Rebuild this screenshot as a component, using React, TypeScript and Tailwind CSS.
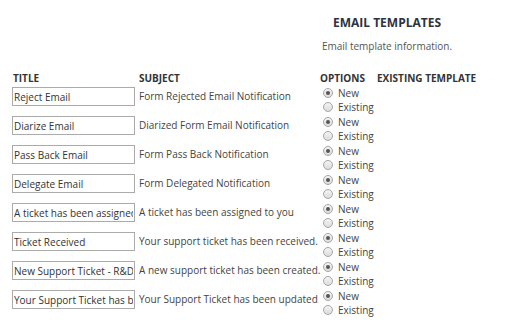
const rows = [
  { title: 'Reject Email', subject: 'Form Rejected Email Notification' },
  { title: 'Diarize Email', subject: 'Diarized Form Email Notification' },
  { title: 'Pass Back Email', subject: 'Form Pass Back Notification' },
  { title: 'Delegate Email', subject: 'Form Delegated Notification' },
  { title: 'A ticket has been assigned to you', subject: 'A ticket has been assigned to you' },
  { title: 'Ticket Received', subject: 'Your support ticket has been received.' },
  { title: 'New Support Ticket - R&D', subject: 'A new support ticket has been created.' },
  { title: 'Your Support Ticket has been updated', subject: 'Your Support Ticket has been updated' },
]

function Radio({ checked, label }: { checked: boolean; label: string }) {
  return (
    <label className="flex h-[14px] items-center gap-[5px]">
      <span className="flex h-[10px] w-[10px] items-center justify-center rounded-full border border-[#a6a6a6] bg-gradient-to-b from-[#f4f4f4] to-[#dcdcdc]">
        {checked && <span className="h-[4px] w-[4px] rounded-full bg-[#555]" />}
      </span>
      <span className="text-[#444]">{label}</span>
    </label>
  )
}

export default function App() {
  return (
    <div
      className="h-[322px] w-[519px] overflow-hidden bg-white text-[10px] text-[#444]"
      style={{ fontFamily: '"Open Sans", "Noto Sans", sans-serif' }}
    >
      <div className="ml-[255px] w-[264px] pt-[15px] text-center">
        <h1 className="text-[12px] font-bold leading-[16px] text-[#2d3340]">EMAIL TEMPLATES</h1>
        <p className="mt-[8px] leading-[14px] text-[#555]">Email template information.</p>
      </div>

      <div className="mt-[18px] pl-[12px]">
        <div className="grid grid-cols-[127px_181px_57px_1fr] text-[10px] font-bold leading-[14px] text-[#333]">
          <span className="pl-px">TITLE</span>
          <span>SUBJECT</span>
          <span>OPTIONS</span>
          <span>EXISTING TEMPLATE</span>
        </div>

        <div className="mt-[1px] flex flex-col gap-px">
          {rows.map((row) => (
            <div key={row.title} className="grid grid-cols-[127px_181px_57px_1fr] items-start">
              <input
                readOnly
                value={row.title}
                className="mt-px h-[19px] w-[123px] border border-[#ababab] bg-white px-px text-[10px] text-[#333] outline-none"
              />
              <span className="flex h-[21px] items-center whitespace-nowrap">{row.subject}</span>
              <div className="flex flex-col pl-[3px]">
                <Radio checked label="New" />
                <Radio checked={false} label="Existing" />
              </div>
              <span />
            </div>
          ))}
        </div>
      </div>
    </div>
  )
}
